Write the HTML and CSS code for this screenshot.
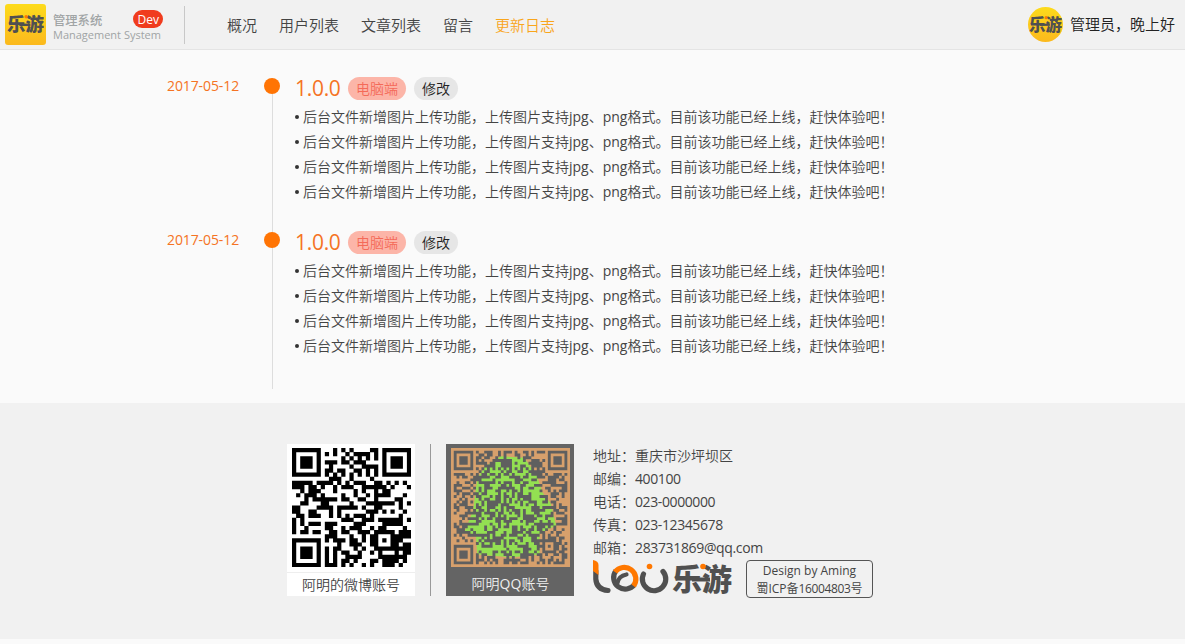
FILE: index.html
```html
<!DOCTYPE html>
<html lang="zh-CN">
<head>
<meta charset="utf-8">
<title>更新日志</title>
<link rel="stylesheet" href="styles.css">
</head>
<body>
<svg width="0" height="0" class="defs" aria-hidden="true">
  <defs>
    <linearGradient id="gold" x1="0" y1="0" x2="0" y2="1"><stop offset="0" stop-color="#fddb1c"/><stop offset="1" stop-color="#fbb91d"/></linearGradient>
    <symbol id="wordmark" viewBox="0 0 60 34">
      <text x="0" y="28" class="mark-text" textLength="60" lengthAdjust="spacingAndGlyphs">乐游</text>
      <rect x="20" y="15.500" width="18" height="4" fill="#505050"/>
      <circle cx="31" cy="4.500" r="2.800" fill="#ff7800" stroke="none"/>
    </symbol>
  </defs>
</svg>
<header class="header">
  <div class="brand">
    <svg class="brand-logo" viewBox="0 0 41 41"><rect width="41" height="41" rx="3" fill="url(#gold)"/><use href="#wordmark" x="2" y="10" width="37" height="21"/></svg>
    <div class="brand-name">
      <div class="brand-cn">管理系统<span class="dev">Dev</span></div>
      <div class="brand-en">Management System</div>
    </div>
  </div>
  <nav class="nav"><a>概况</a><a>用户列表</a><a>文章列表</a><a>留言</a><a class="active">更新日志</a></nav>
  <div class="user">
    <svg class="avatar" viewBox="0 0 35 35"><circle cx="17.500" cy="17.500" r="17.500" fill="url(#gold)"/><use href="#wordmark" x="1" y="8" width="33" height="19"/></svg>
    <span>管理员，晚上好</span>
  </div>
</header>
<main class="timeline">
  <section class="entry">
    <time class="date">2017-05-12</time>
    <div class="body">
      <div class="head"><span class="version">1.0.0</span><span class="tag tag-pc">电脑端</span><span class="tag">修改</span></div>
      <ul class="changes">
        <li>后台文件新增图片上传功能，上传图片支持jpg、png格式。目前该功能已经上线，赶快体验吧！</li>
        <li>后台文件新增图片上传功能，上传图片支持jpg、png格式。目前该功能已经上线，赶快体验吧！</li>
        <li>后台文件新增图片上传功能，上传图片支持jpg、png格式。目前该功能已经上线，赶快体验吧！</li>
        <li>后台文件新增图片上传功能，上传图片支持jpg、png格式。目前该功能已经上线，赶快体验吧！</li>
      </ul>
    </div>
  </section>
  <section class="entry">
    <time class="date">2017-05-12</time>
    <div class="body">
      <div class="head"><span class="version">1.0.0</span><span class="tag tag-pc">电脑端</span><span class="tag">修改</span></div>
      <ul class="changes">
        <li>后台文件新增图片上传功能，上传图片支持jpg、png格式。目前该功能已经上线，赶快体验吧！</li>
        <li>后台文件新增图片上传功能，上传图片支持jpg、png格式。目前该功能已经上线，赶快体验吧！</li>
        <li>后台文件新增图片上传功能，上传图片支持jpg、png格式。目前该功能已经上线，赶快体验吧！</li>
        <li>后台文件新增图片上传功能，上传图片支持jpg、png格式。目前该功能已经上线，赶快体验吧！</li>
      </ul>
    </div>
  </section>
</main>
<footer class="footer">
  <div class="card weibo">
    <svg class="qr" viewBox="0 0 29 29"><path id="qr-weibo" fill="#000"/></svg>
    <div class="caption">阿明的微博账号</div>
  </div>
  <div class="rule"></div>
  <div class="card qq">
    <svg class="qr" viewBox="-1 -1 43 43">
      <rect x="-1" y="-1" width="43" height="43" fill="#d7a06c"/>
      <path fill="#93e052" d="M11 6L17 2L25.500 2.500L30 9L32 15L35 19L37 27L31 30L31 37.500L21 38.500L8.500 37.500L8 31L4 29L7 21.500L8.500 10Z"/>
      <path id="qr-qq" fill="#5f5f5f"/>
    </svg>
    <div class="caption">阿明QQ账号</div>
  </div>
  <div class="contact">
    <p>地址：重庆市沙坪坝区</p>
    <p>邮编：<span class="value">400100</span></p>
    <p>电话：<span class="value">023-0000000</span></p>
    <p>传真：<span class="value">023-12345678</span></p>
    <p>邮箱：<span class="value mail">283731869@qq.com</span></p>
    <div class="sign">
      <svg class="logo" viewBox="0 0 139 36" fill="none" stroke-width="5.200">
        <path stroke="#505050" d="M2.800 11V19Q3.500 29.500 15 30.500" stroke-linecap="round"/>
        <path fill="#ff7800" d="M0 0Q5.500 1 5.500 5V15L0 11Z"/>
        <path stroke="#505050" d="M23 10.500A11.500 11.500 0 1 0 41.500 24.500"/>
        <path stroke="#ff7800" d="M22 12A11.500 11.500 0 0 1 40.500 26"/>
        <path stroke="#505050" stroke-width="4.200" d="M24.500 23Q25.500 16 33.500 14.500" stroke-linecap="round"/>
        <path stroke="#505050" d="M50.500 14A11.700 11.700 0 1 0 70 11.500" stroke-linecap="round"/>
        <circle cx="56.500" cy="6.500" r="2.800" fill="#ff7800"/>
        <use href="#wordmark" x="79" y="2" width="60" height="34"/>
      </svg>
      <div class="license"><span>Design by Aming</span><span>蜀ICP备<span class="number">16004803</span>号</span></div>
    </div>
  </div>
</footer>
<script src="qr.js"></script>
</body>
</html>
```
FILE: styles.css
```css
* { box-sizing: border-box; }
body { margin: 0; background: #fafafa; color: #444; font: 400 14px/25px "Open Sans", "Noto Sans CJK SC DemiLight", "Noto Sans CJK SC Light", "Noto Sans CJK SC", sans-serif; }
.defs { display: block; }
.header { display: flex; height: 50px; background: #f1f1f1; border-bottom: 1px solid #e4e4e4; }
.brand { display: flex; width: 185px; height: 38px; margin-top: 6px; padding-left: 5px; border-right: 1px solid #c8c8c8; }
.brand-logo { width: 41px; height: 41px; margin-top: -2px; flex: none; }
.brand-name { margin-left: 7px; color: #a0a4a5; white-space: nowrap; }
.brand-cn { display: flex; height: 21px; font: 500 12.3px/30px "Open Sans", "Noto Sans CJK SC", sans-serif; }
.dev { width: 30px; height: 18px; margin: 4px 0 0 31px; border-radius: 9px; background: #f03c1e; color: #fff; font-size: 12px; line-height: 19px; text-align: center; }
.brand-en { font: 500 11px/16px "Open Sans", sans-serif; }
.nav { display: flex; gap: 22px; margin-left: 42px; font-size: 15px; line-height: 50px; }
.active { color: #f9a51b; }
.user { display: flex; align-items: center; gap: 7px; margin: 0 10px 0 auto; font-size: 15px; color: #222; }
.avatar { width: 35px; height: 35px; }
.mark-text { font: 900 30px "Noto Sans CJK SC", sans-serif; fill: #505050; stroke: none; }
.timeline { height: 353px; padding: 28px 0 0 167px; }
.entry { display: flex; height: 154px; }
.entry:last-child { height: 157px; }
.date { width: 105px; line-height: 16px; color: #f57323; letter-spacing: -.1px; }
.body { position: relative; border-left: 1px solid #ddd; padding-left: 22px; }
.body::before { content: ""; position: absolute; left: -9px; top: 0; width: 16px; height: 16px; border-radius: 50%; background: #ff7404; }
.head { display: flex; height: 23px; gap: 8px; margin-top: -1px; align-items: center; }
.version { width: 45px; font-size: 21px; color: #f57323; letter-spacing: -.3px; }
.tag { height: 23px; padding: 0 8px; border-radius: 12px; background: #e6e6e6; color: #222; line-height: 23px; }
.tag-pc { background: #fcb5a8; color: #f46a58; }
.changes { margin: 4px 0 0; padding: 0; list-style: none; }
.changes li { display: flex; align-items: center; height: 25px; white-space: nowrap; }
.changes li::before { content: ""; width: 4px; height: 4px; margin-right: 4px; border-radius: 50%; background: #333; }
.footer { display: flex; height: 236px; padding: 41px 0 0 287px; background: #f1f1f1; }
.card { width: 128px; height: 152px; padding: 4px 4px 0 5px; background: #fff; }
.qr { display: block; width: 119px; height: 119px; }
.caption { height: 27px; line-height: 27px; text-align: center; margin-top: 3px; }
.weibo .caption { margin: 5px -4px 0 -5px; border-top: 1px solid #eee; line-height: 24px; }
.rule { width: 1px; height: 152px; margin: 0 15px; background: #999; }
.qq { background: #646464; color: #eee; }
.contact { margin-left: 19px; }
.contact p { margin: 0; height: 23px; line-height: 23px; }
.value { letter-spacing: -.4px; }
.mail { letter-spacing: -.35px; }
.number { letter-spacing: -.35px; }
.sign { display: flex; gap: 14px; margin-top: 1px; }
.logo { width: 139px; height: 36px; }
.license { display: flex; flex-direction: column; width: 127px; height: 38px; border: 1px solid #555; border-radius: 4px; font-size: 12px; line-height: 18px; padding-top: 1px; text-align: center; }
```
FILE: qr.js
```js
// Minimal QR encoder: byte mode, fixed version, level and mask per symbol.
function mul(a, b) {
  let r = 0;
  for (; b; b >>= 1) { if (b & 1) r ^= a; a = (a << 1) ^ (a & 128 ? 0x11d : 0); }
  return r;
}
function parity(data, n) {
  let gen = [1], root = 1;
  for (let i = 0; i < n; i++) {
    const next = gen.concat(0);
    gen.forEach((g, j) => { next[j + 1] ^= mul(g, root); });
    gen = next;
    root = mul(root, 2);
  }
  const rem = data.concat(Array(n).fill(0));
  data.forEach((_, i) => {
    const f = rem[i];
    gen.forEach((g, j) => { rem[i + j] ^= mul(g, f); });
  });
  return rem.slice(-n);
}
function bch(value, poly, n) {
  let r = value << n;
  for (let i = 20; i >= n; i--) if (r >> i & 1) r ^= poly << (i - n);
  return value << n | r;
}
function drawQr(id, text, { version, level, dataBytes, ecBytes, blocks, align, mask }) {
  const size = 17 + 4 * version;
  const cells = Array.from({ length: size }, () => Array(size).fill(null));
  const set = (x, y, v) => { if (x >= 0 && y >= 0 && x < size && y < size) cells[y][x] = v ? 1 : 0; };
  const ring = (cx, cy, r, dark) => {
    for (let y = -r; y <= r; y++) for (let x = -r; x <= r; x++) set(cx + x, cy + y, dark(Math.max(Math.abs(x), Math.abs(y))));
  };
  for (let i = 0; i < size; i++) { set(6, i, i % 2 === 0); set(i, 6, i % 2 === 0); }
  align.forEach(x => align.forEach(y => {
    if ((x === 6 && y === 6) || (x === 6 && y > size - 10) || (y === 6 && x > size - 10)) return;
    ring(x, y, 2, d => d !== 1);
  }));
  [[3, 3], [size - 4, 3], [3, size - 4]].forEach(([x, y]) => ring(x, y, 4, d => d !== 2 && d !== 4));
  const fmt = bch(level << 3 | mask, 0x537, 10) ^ 0x5412;
  for (let i = 0; i < 15; i++) {
    const b = fmt >> i & 1;
    set(8, i < 6 ? i : i < 8 ? i + 1 : size - 15 + i, b);
    set(i < 8 ? size - 1 - i : i === 8 ? 7 : 14 - i, 8, b);
  }
  set(8, size - 8, 1);
  let bits = "0100" + text.length.toString(2).padStart(8, "0");
  for (const ch of text) bits += ch.charCodeAt(0).toString(2).padStart(8, "0");
  bits += "0000";
  const data = bits.match(/.{8}/g).map(b => parseInt(b, 2));
  for (let pad = 0xec; data.length < dataBytes; pad ^= 0xfd) data.push(pad);
  const per = dataBytes / blocks, parts = [];
  for (let i = 0; i < blocks; i++) parts.push(data.slice(i * per, (i + 1) * per));
  const ecs = parts.map(p => parity(p, ecBytes));
  const stream = [];
  for (let i = 0; i < per; i++) parts.forEach(p => stream.push(p[i]));
  for (let i = 0; i < ecBytes; i++) ecs.forEach(e => stream.push(e[i]));
  const masks = [
    (x, y) => (x + y) % 2, (x, y) => y % 2, (x) => x % 3, (x, y) => (x + y) % 3,
    (x, y) => (Math.floor(x / 3) + Math.floor(y / 2)) % 2, (x, y) => x * y % 2 + x * y % 3,
    (x, y) => (x * y % 2 + x * y % 3) % 2, (x, y) => ((x + y) % 2 + x * y % 3) % 2
  ];
  let k = 0, up = true;
  for (let right = size - 1; right > 0; right -= 2) {
    if (right === 6) right = 5;
    for (let j = 0; j < size; j++) for (let s = 0; s < 2; s++) {
      const x = right - s, y = up ? size - 1 - j : j;
      if (cells[y][x] !== null) continue;
      const bit = (stream[k >> 3] || 0) >> (7 - (k & 7)) & 1;
      k++;
      cells[y][x] = bit ^ (masks[mask](x, y) === 0 ? 1 : 0);
    }
    up = !up;
  }
  let d = "";
  cells.forEach((row, y) => row.forEach((c, x) => { if (c) d += `M${x} ${y}h1.03v1.03h-1.03z`; }));
  document.getElementById(id).setAttribute("d", d);
}
drawQr("qr-weibo", "http://weibo.cn/qr/userinfo?uid=2837318695",
  { version: 3, level: 1, dataBytes: 55, ecBytes: 15, blocks: 1, align: [6, 22], mask: 2 });
drawQr("qr-qq", "http://qm.qq.com/cgi-bin/qm/qr?k=9Xv3bTz5LwqR7uKfPy2HdNs8GmJc4EaV&authKey=Zt6YpWn1QxBr0&noverify=0&source=4&uin=283731869",
  { version: 6, level: 1, dataBytes: 136, ecBytes: 18, blocks: 2, align: [6, 34], mask: 3 });
```
